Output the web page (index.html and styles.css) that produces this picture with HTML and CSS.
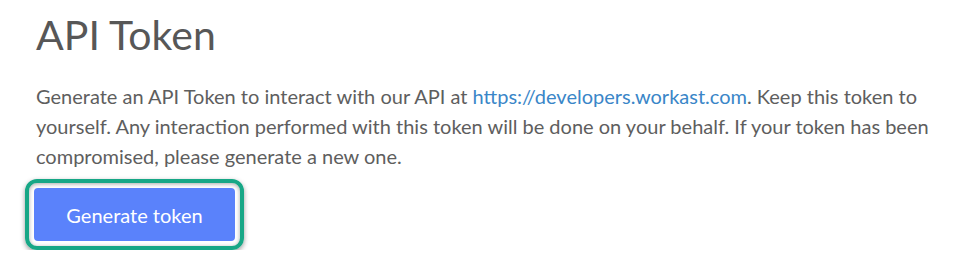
FILE: index.html
```html
<!DOCTYPE html>
<html>
<head>
<meta charset="utf-8">
<link rel="stylesheet" href="styles.css">
</head>
<body>
<div class="page">
  <h1 class="title">API Token</h1>
  <p class="desc">Generate an API Token to interact with our API at <a class="link" href="#">https://developers.workast.com</a>. Keep this token to yourself. Any interaction performed with this token will be done on your behalf. If your token has been compromised, please generate a new one.</p>
  <div class="ring">
    <button class="btn">Generate token</button>
  </div>
</div>
</body>
</html>
```

FILE: styles.css
```css
html, body {
  margin: 0;
  padding: 0;
  background: #ffffff;
}
.page {
  font-family: Lato, "Liberation Sans", sans-serif;
  padding: 11px 30px 0 36px;
}
.title {
  margin: 0;
  font-size: 41px;
  line-height: 48px;
  font-weight: 400;
  color: #575757;
}
.desc {
  margin: 22px 0 0 0;
  font-size: 20px;
  line-height: 30px;
  color: #5e5e5e;
}
.link {
  color: #3a86c8;
  text-decoration: none;
}
.ring {
  display: inline-block;
  margin: 8px 0 0 -11px;
  padding: 5px;
  border: 4px solid #17a786;
  border-radius: 12px;
  box-shadow: 0 2px 5px rgba(0,0,0,0.4), inset 0 1px 4px rgba(0,0,0,0.35);
}
.btn {
  display: block;
  width: 201px;
  height: 53px;
  border: none;
  border-radius: 4px;
  background: #5a82fb;
  color: #ffffff;
  font-family: Lato, "Liberation Sans", sans-serif;
  font-size: 20px;
  padding: 0;
}
```
